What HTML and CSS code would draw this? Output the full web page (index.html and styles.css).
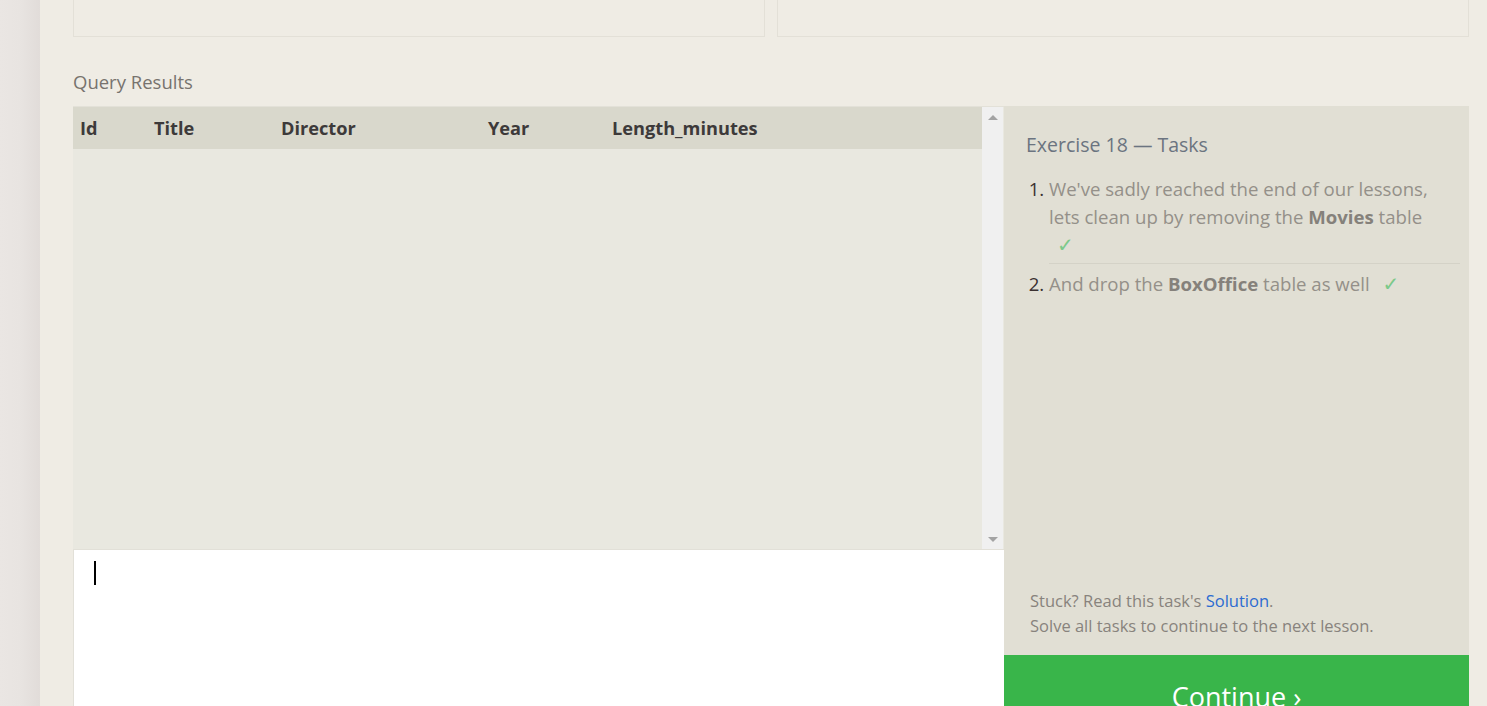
FILE: index.html
```html
<!DOCTYPE html>
<html>
<head>
<meta charset="utf-8">
<link rel="stylesheet" href="styles.css">
</head>
<body>
<div class="page">
  <div class="sidebar"></div>
  <main class="main">
    <div class="top-row">
      <div class="top-box"></div>
      <div class="top-box"></div>
    </div>
    <h2 class="results-title">Query Results</h2>
    <div class="workspace">
      <div class="left-col">
        <div class="results">
          <div class="table-wrap">
            <table class="results-table">
              <thead>
                <tr>
                  <th class="c-id">Id</th>
                  <th class="c-title">Title</th>
                  <th class="c-director">Director</th>
                  <th class="c-year">Year</th>
                  <th>Length_minutes</th>
                </tr>
              </thead>
            </table>
          </div>
          <div class="scrollbar">
            <span class="arrow up"></span>
            <span class="arrow down"></span>
          </div>
        </div>
        <div class="editor"><span class="cursor"></span></div>
      </div>
      <div class="right-col">
        <div class="tasks">
          <h3 class="tasks-title">Exercise 18 — Tasks</h3>
          <ol class="task-list">
            <li>We've sadly reached the end of our lessons, lets clean up by removing the <b>Movies</b> table <span class="check">✓</span></li>
            <li>And drop the <b>BoxOffice</b> table as well <span class="check">✓</span></li>
          </ol>
          <div class="tasks-footer">
            <p>Stuck? Read this task's <a href="#">Solution</a>.</p>
            <p>Solve all tasks to continue to the next lesson.</p>
          </div>
        </div>
        <button class="continue">Continue ›</button>
      </div>
    </div>
  </main>
</div>
</body>
</html>
```

FILE: styles.css
```css
* { box-sizing: border-box; }
html, body {
  margin: 0;
  height: 100%;
  overflow: hidden;
}
body {
  font-family: "Open Sans", "Noto Sans", sans-serif;
  background: #efece4;
}
.page {
  display: flex;
  height: 706px;
}
.sidebar {
  width: 40px;
  flex: none;
  background: linear-gradient(to right, #eae6e3 0%, #e8e4e1 50%, #e1dcd9 100%);
}
.main {
  flex: 1;
  padding: 0 18px 0 33px;
  background: #efece4;
  display: flex;
  flex-direction: column;
}
.top-row {
  display: grid;
  grid-template-columns: 1fr 1fr;
  gap: 12px;
  height: 37px;
  flex: none;
}
.top-box {
  border: 1px solid #e3e0d7;
  border-top: none;
}
.results-title {
  margin: 33px 0 0;
  font-size: 18.5px;
  font-weight: 400;
  line-height: 24px;
  color: #77736e;
  height: 36px;
}
.workspace {
  display: grid;
  grid-template-columns: 931px 465px;
  flex: 1;
  min-height: 0;
}
.left-col {
  display: flex;
  flex-direction: column;
}
.results {
  height: 443px;
  display: flex;
  background: #e9e8e0;
  border-top: 1px solid #e3e1d8;
}
.table-wrap {
  flex: 1;
}
.results-table {
  width: 100%;
  border-collapse: collapse;
}
.results-table th {
  background: #d9d8cc;
  height: 42px;
  text-align: left;
  padding: 0 0 0 7px;
  font-size: 18.2px;
  font-weight: 700;
  color: #3d3a3a;
}
.c-id { width: 74px; }
.c-title { width: 127px; }
.c-director { width: 207px; }
.c-year { width: 124px; }
.scrollbar {
  width: 21px;
  margin-right: 1px;
  background: #f0f0f0;
  display: flex;
  flex-direction: column;
  justify-content: space-between;
  align-items: center;
  padding: 8px 0 7px;
}
.arrow {
  width: 0;
  height: 0;
  border-left: 5px solid transparent;
  border-right: 5px solid transparent;
}
.arrow.up { border-bottom: 5px solid #a3a3a3; }
.arrow.down { border-top: 5px solid #a3a3a3; }
.editor {
  flex: 1;
  background: #fff;
  border-left: 1px solid #e2e0d8;
  border-top: 1px solid #e2e0d8;
  padding: 11px 0 0 20px;
}
.cursor {
  display: block;
  width: 2px;
  height: 24px;
  background: #000;
}
.right-col {
  display: flex;
  flex-direction: column;
}
.tasks {
  height: 549px;
  background: #e1dfd4;
  padding: 24px 9px 0 22px;
  display: flex;
  flex-direction: column;
}
.tasks-title {
  margin: 0;
  font-size: 19.5px;
  font-weight: 400;
  line-height: 30px;
  color: #6b7480;
}
.task-list {
  margin: 15px 0 0;
  padding: 0 0 0 23px;
  font-size: 18.6px;
  line-height: 28px;
  color: #949089;
}
.task-list li {
  padding-right: 20px;
}
.task-list li::marker {
  color: #3a3030;
}
.task-list li + li {
  border-top: 1px solid #d4d2c7;
  margin-top: 4px;
  padding-top: 6px;
}
.task-list b {
  color: #85817b;
}
.check {
  display: inline-block;
  margin-left: 8px;
  color: #7cc98a;
  font-family: "DejaVu Sans", sans-serif;
  font-size: 20px;
}
.tasks-footer {
  margin-top: auto;
  padding: 0 0 17px 4px;
  font-size: 16.5px;
  line-height: 25px;
  color: #88837d;
}
.tasks-footer p { margin: 0; }
.tasks-footer a {
  color: #2c6bd1;
  text-decoration: none;
}
.continue {
  flex: 1;
  border: none;
  background: #39b54a;
  color: #fff;
  font-family: "Open Sans", "Noto Sans", sans-serif;
  font-size: 27px;
  padding: 20px 0 0;
  text-align: center;
  display: block;
  width: 100%;
  line-height: 44px;
}
```
